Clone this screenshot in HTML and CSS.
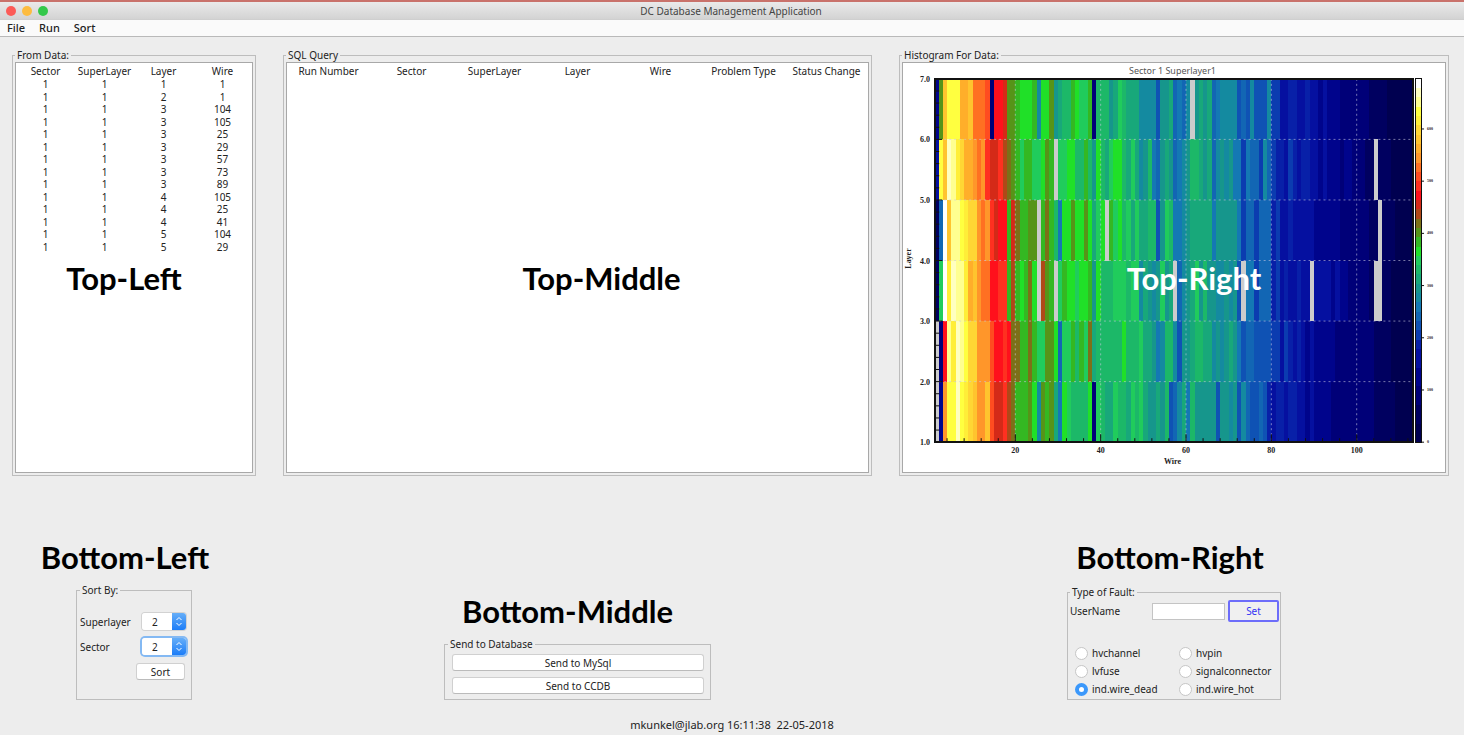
FILE: index.html
```html
<!DOCTYPE html>
<html lang="en">
<head>
<meta charset="utf-8">
<title>DC Database Management Application</title>
<link rel="stylesheet" href="styles.css">
</head>
<body>
<header class="titlebar">
  <div class="lights"><span class="light close"></span><span class="light minimize"></span><span class="light zoom"></span></div>
  <h1 class="title">DC Database Management Application</h1>
</header>
<nav class="menubar">
  <button class="menu" type="button">File</button>
  <button class="menu" type="button">Run</button>
  <button class="menu" type="button">Sort</button>
</nav>
<main class="workspace">
  <section class="row panels">
    <fieldset class="panel">
      <legend>From Data:</legend>
      <div class="view">
        <table class="data">
          <thead><tr><th>Sector</th><th>SuperLayer</th><th>Layer</th><th>Wire</th></tr></thead>
          <tbody>
            <tr><td>1</td><td>1</td><td>1</td><td>1</td></tr>
            <tr><td>1</td><td>1</td><td>2</td><td>1</td></tr>
            <tr><td>1</td><td>1</td><td>3</td><td>104</td></tr>
            <tr><td>1</td><td>1</td><td>3</td><td>105</td></tr>
            <tr><td>1</td><td>1</td><td>3</td><td>25</td></tr>
            <tr><td>1</td><td>1</td><td>3</td><td>29</td></tr>
            <tr><td>1</td><td>1</td><td>3</td><td>57</td></tr>
            <tr><td>1</td><td>1</td><td>3</td><td>73</td></tr>
            <tr><td>1</td><td>1</td><td>3</td><td>89</td></tr>
            <tr><td>1</td><td>1</td><td>4</td><td>105</td></tr>
            <tr><td>1</td><td>1</td><td>4</td><td>25</td></tr>
            <tr><td>1</td><td>1</td><td>4</td><td>41</td></tr>
            <tr><td>1</td><td>1</td><td>5</td><td>104</td></tr>
            <tr><td>1</td><td>1</td><td>5</td><td>29</td></tr>
          </tbody>
        </table>
        <h2 class="caption over over-left">Top-Left</h2>
      </div>
    </fieldset>
    <fieldset class="panel">
      <legend>SQL Query</legend>
      <div class="view">
        <table class="data">
          <thead><tr><th>Run Number</th><th>Sector</th><th>SuperLayer</th><th>Layer</th><th>Wire</th><th>Problem Type</th><th>Status Change</th></tr></thead>
        </table>
        <h2 class="caption over over-middle">Top-Middle</h2>
      </div>
    </fieldset>
    <fieldset class="panel">
      <legend>Histogram For Data:</legend>
      <div class="view">
        <svg class="chart" id="chart" viewBox="903 63 543 408" role="img" aria-label="Sector 1 Superlayer1"></svg>
        <h2 class="caption over over-right">Top-Right</h2>
      </div>
    </fieldset>
  </section>
  <section class="row controls">
    <div class="cell">
      <h2 class="caption under-left">Bottom-Left</h2>
      <fieldset class="group sort-group">
        <legend>Sort By:</legend>
        <div class="field">
          <label for="superlayer">Superlayer</label>
          <span class="combo"><select id="superlayer"><option>1</option><option selected>2</option><option>3</option></select>
            <svg class="stepper" viewBox="0 0 14 17"><path d="M4.500 7 7 4.500 9.500 7M4.500 10 7 12.500 9.500 10"/></svg></span>
        </div>
        <div class="field">
          <label for="sector">Sector</label>
          <span class="combo focused"><select id="sector"><option>1</option><option selected>2</option><option>3</option></select>
            <svg class="stepper" viewBox="0 0 14 17"><path d="M4.500 7 7 4.500 9.500 7M4.500 10 7 12.500 9.500 10"/></svg></span>
        </div>
        <button class="btn sort-btn" type="button">Sort</button>
      </fieldset>
    </div>
    <div class="cell">
      <h2 class="caption under-middle">Bottom-Middle</h2>
      <fieldset class="group send-group">
        <legend>Send to Database</legend>
        <button class="btn" type="button">Send to MySql</button>
        <button class="btn" type="button">Send to CCDB</button>
      </fieldset>
    </div>
    <div class="cell">
      <h2 class="caption under-right">Bottom-Right</h2>
      <fieldset class="group fault-group">
        <legend>Type of Fault:</legend>
        <div class="user">
          <label for="username">UserName</label>
          <input class="textbox" id="username" type="text">
          <button class="set-btn" type="button">Set</button>
        </div>
        <div class="radios">
          <label><input type="radio" name="fault">hvchannel</label>
          <label><input type="radio" name="fault">hvpin</label>
          <label><input type="radio" name="fault">lvfuse</label>
          <label><input type="radio" name="fault">signalconnector</label>
          <label><input type="radio" name="fault" checked>ind.wire_dead</label>
          <label><input type="radio" name="fault">ind.wire_hot</label>
        </div>
      </fieldset>
    </div>
  </section>
</main>
<footer class="status">mkunkel@jlab.org 16:11:38&nbsp; 22-05-2018</footer>
<script src="chart.js"></script>
</body>
</html>
```
FILE: styles.css
```css
* { box-sizing: border-box; }
body {
  margin: 0;
  min-height: 100vh;
  display: flex;
  flex-direction: column;
  background: #ededed;
  color: #222;
  font: 10px/12px "Noto Sans", "Open Sans", sans-serif;
}
button, input, select { font: inherit; color: inherit; }
h1, h2 { margin: 0; }
fieldset { margin: 0; min-width: 0; border: 1px solid #bdbdbd; }
legend { padding: 0 2px; }

.titlebar {
  display: flex;
  align-items: center;
  height: 20px;
  border-top: 2px solid #c9726b;
  border-bottom: 1px solid #cfcfcf;
  background: linear-gradient(#eaeaea, #d3d3d3);
}
.lights { display: flex; gap: 6px; flex: 1; padding-left: 6px; }
.light { width: 10px; height: 10px; border-radius: 50%; }
.close { background: #fc5b57; }
.minimize { background: #fdbc40; }
.zoom { background: #34c84a; }
.title { font-size: 10px; font-weight: 400; color: #444; }
.titlebar::after { content: ""; flex: 1; margin-left: 8px; }

.menubar {
  display: flex;
  gap: 14px;
  height: 17px;
  padding-left: 7px;
  background: #fafafa;
  border-bottom: 1px solid #b9b9b9;
}
.menu { border: 0; padding: 0; background: none; font-size: 11px; font-weight: 500; line-height: 16px; }

.workspace { flex: 1; display: flex; flex-direction: column; padding: 12px 15px 0 12px; }
.row { display: grid; grid-template-columns: 244fr 589fr 550fr; column-gap: 27px; }
.panels { flex: 1; }
.panel { display: flex; flex-direction: column; padding: 1px 2px 2px; }
.view { position: relative; height: 100%; background: #fff; border: 1px solid #a8a8a8; }
.data { width: 100%; table-layout: fixed; border-collapse: collapse; text-align: center; margin-top: 2px; }
.data th, .data td { padding: 0; font-weight: 400; }
.data th, .data tr:nth-child(odd) td { padding-bottom: 1px; }
.chart { display: block; width: 100%; height: 100%; }

.caption { font: 700 31px/38px Lato, "Open Sans", sans-serif; color: #000; text-align: center; white-space: nowrap; }
.over { position: absolute; top: 48%; left: 0; right: 0; pointer-events: none; }
.over-left { right: 20px; }
.over-middle { left: 48px; }
.over-right { color: #fff; left: 40px; }
.under-left { margin-right: 18px; }
.under-middle { margin-right: 20px; }
.under-right { margin-right: 8px; margin-bottom: 2px; }

.controls { padding-top: 62px; }
.cell { display: flex; flex-direction: column; align-items: center; justify-content: flex-end; gap: 8px; }
.sort-group { width: 116px; padding: 17px 5px 19px 3px; }
.field { display: flex; align-items: center; justify-content: space-between; height: 17px; margin-bottom: 8px; }
.combo { position: relative; width: 44px; height: 17px; border-radius: 3px; box-shadow: 0 0 0 1px #d2d2d2; }
.focused { box-shadow: 0 0 0 2px #84b9f3; }
.combo select { appearance: none; display: block; width: 100%; height: 100%; border: 0; border-radius: 3px; padding: 0 0 0 10px; background: #fff; outline: 0; }
.stepper { position: absolute; top: 0; right: 0; width: 14px; height: 17px; border-radius: 0 3px 3px 0; background: linear-gradient(#66aef8, #1c7df8); fill: none; stroke: #fff; pointer-events: none; }
.btn { display: block; height: 17px; padding: 0; border: 1px solid #d0d0d0; border-bottom-color: #bbb; border-radius: 3px; background: #fff; line-height: 14px; }
.sort-btn { width: 49px; margin-left: auto; margin-right: 1px; }
.send-group { width: 267px; padding: 4px 6px 5px 7px; display: grid; }
.send-group legend { margin-left: -4px; }
.send-group .btn { width: 100%; }
.send-group .btn + .btn { margin-top: 6px; }

.fault-group { width: 214px; padding: 2px 1px 1px 2px; }
.user { display: flex; align-items: center; gap: 3px; margin-bottom: 22px; }
.user label { flex: 1; }
.textbox { width: 73px; height: 17px; border: 1px solid #c4c4c4; background: #fff; padding: 0 3px; }
.set-btn { width: 51px; height: 22px; padding: 0; border: 2px solid #6d6dfa; border-radius: 2px; background: #f0f0f0; color: #3434f4; }
.radios { display: grid; grid-template-columns: 104px 1fr; padding-left: 5px; }
.radios label { display: flex; align-items: center; gap: 4px; height: 18px; white-space: nowrap; }
.radios input { appearance: none; flex: none; width: 13px; height: 13px; margin: 0; border: 1px solid #c6c6c6; border-radius: 50%; background: #fff; }
.radios input:checked { border: 4px solid #3b98fb; }

.status { padding: 19px 0 4px; text-align: center; font-size: 11px; }

.chart rect { shape-rendering: crispEdges; }
.chart text { fill: #222; text-anchor: middle; }
.chart .heading { font-size: 9px; fill: #555; }
.chart .axis { font: 700 8px "Liberation Serif", serif; }
.chart .scale { font: 700 4px "Liberation Serif", serif; text-anchor: start; }
.chart .end { text-anchor: end; }
.chart .grid { stroke: #c8c8e0; stroke-opacity: .6; stroke-dasharray: 2 3; }
.chart .frame { fill: none; stroke: #111; stroke-width: 2; }
.chart .thin { stroke-width: 1; }
.chart .tick { stroke: #111; }
```
FILE: chart.js
```js
const palette = {
  a: "#000050", b: "#000060", c: "#000078", d: "#00048c", e: "#0510a0", f: "#0820a8", g: "#0b3cb0",
  h: "#0f52b4", i: "#1266b4", j: "#1478b4", k: "#148aa0", l: "#16968c", m: "#18a87a", n: "#1cb868",
  o: "#20cc5c", p: "#20e028", q: "#34b822", r: "#569418", s: "#7c7018", t: "#b04818", u: "#d42a18",
  v: "#ff101c", w: "#ff3020", x: "#ff4c20", y: "#ff7022", z: "#ff962a", A: "#ffae2a", B: "#ffc42e",
  C: "#ffd634", D: "#ffee38", E: "#ffff40", F: "#ffff90", G: "#ffffc0", H: "#ffffff", ".": "#cccccc"
};

// Layers from top to bottom; a number after a letter repeats that wire colour.
const layers = [
  "d r B E3 A2 B y3 x c v2 u r2 q p3 q k p2 r l m n2 q p o2 q c n3 l m o n m3 k4 h l2 m i j i k . l m l m i j k4 h i h k h2 h k g2 e2 f2 e2 f e2 d e d3 c7 b4 a5",
  "e E B G F D C A2 z y z w u2 w t s r q o q2 o2 p r q . o2 p2 n2 q n l p n m o p2 n m o m k l n j i l m l i j k l n2 m l m i k l k l j2 g j i2 g k i g f2 e g f e f2 e2 d e d3 c d2 c3 b2 . b3 a5",
  "b i H B F2 E D C2 z y z w u v2 q u s q2 r2 . q s q n j p2 r p2 r p m o p . q o p n o m o m2 n2 h l o n j2 k l m5 j l5 j g i2 g i3 f g e2 f e5 d6 c7 b2 . b3 a5",
  "b o H D G F2 D A B z y2 v2 w2 q t q p q s p . t r q . o q p2 o p2 q l p n3 o3 n o2 k m l k l o l m . i k l m o l n l2 k2 l k l h . j2 g i3 f g e f e2 f e2 . e4 d e d2 c5 b .2 b2 a5",
  ". c v F D G F E C2 z3 x v2 w v s2 q2 s q o2 r2 p i o2 q n q o s m n6 p n3 o m2 l j k n2 k h l2 m n2 m2 k l k l m l j h i2 h4 g2 e g f e f e d e d5 c9 b4 a8",
  ". d z E2 G E D C B z2 B x u2 w t s q3 r p k r q r m j p o n4 p c o n m2 o n2 m o n o m l2 m l n h i k m j n l5 h l2 k l h k i h2 i h f e f2 e f2 e2 d e d4 c10 b5 a7"
];
const left = 934.3, top_ = 78, right = 1413.1, bottom = 442, wires = 112;
const cellWidth = (right - left) / wires, cellHeight = (bottom - top_) / layers.length;
const parts = [];
const rect = (x, y, w, h, fill) => parts.push(`<rect x="${x}" y="${y}" width="${w}" height="${h}" fill="${fill}"/>`);
const line = (x1, y1, x2, y2, name) => parts.push(`<line x1="${x1}" y1="${y1}" x2="${x2}" y2="${y2}" class="${name}"/>`);
const text = (x, y, value, name) => parts.push(`<text x="${x}" y="${y}" class="${name}">${value}</text>`);

layers.forEach((layer, row) => {
  const y = top_ + row * cellHeight;
  let wire = 0;
  layer.split(" ").forEach(run => {
    const count = Math.min(Number(run.slice(1)) || 1, wires - wire);
    rect(left + wire * cellWidth, y, count * cellWidth, cellHeight, palette[run[0]]);
    wire += count;
  });
  if (wire < wires) rect(left + wire * cellWidth, y, (wires - wire) * cellWidth, cellHeight, palette.a);
});

for (let row = 1; row < 6; row++) line(left, top_ + row * cellHeight, right, top_ + row * cellHeight, "grid");
for (let wire = 20; wire <= 100; wire += 20) {
  const x = left + (wire - 1) * cellWidth;
  line(x, top_, x, bottom, "grid");
  text(x, 453, wire, "axis");
}
for (let wire = 4; wire <= 112; wire += 4) {
  const x = left + (wire - 1) * cellWidth;
  line(x, bottom, x, bottom - (wire % 20 ? 4 : 8), "tick");
}
for (let step = 0; step <= 30; step++) {
  const y = bottom - step * cellHeight / 5;
  line(left, y, left + (step % 5 ? 5 : 8), y, "tick");
}
for (let value = 1; value <= 7; value++) text(930, bottom - (value - 1) * cellHeight + 3, value.toFixed(1), "axis end");
parts.push(`<rect x="935" y="78" width="479" height="364" class="frame"/>`);

const stops = "aabbccddeefghijklmnopqrstuvwxyzABCDEFGH";
const stopHeight = 364 / stops.length;
[...stops].forEach((key, i) => rect(1417, bottom - (i + 1) * stopHeight, 6, stopHeight, palette[key]));
parts.push(`<rect x="1416.500" y="78" width="6" height="364" class="frame thin"/>`);
for (let value = 0; value <= 600; value += 100) {
  const y = bottom - value * 0.523;
  line(1422, y, 1425, y, "tick");
  text(1428, y + 1, value, "scale");
}
text(1173, 73, "Sector 1 Superlayer1", "heading");
text(1173, 464, "Wire", "axis");
parts.push(`<text class="axis" transform="translate(911 258) rotate(-90)">Layer</text>`);
document.getElementById("chart").innerHTML = parts.join("");
```
